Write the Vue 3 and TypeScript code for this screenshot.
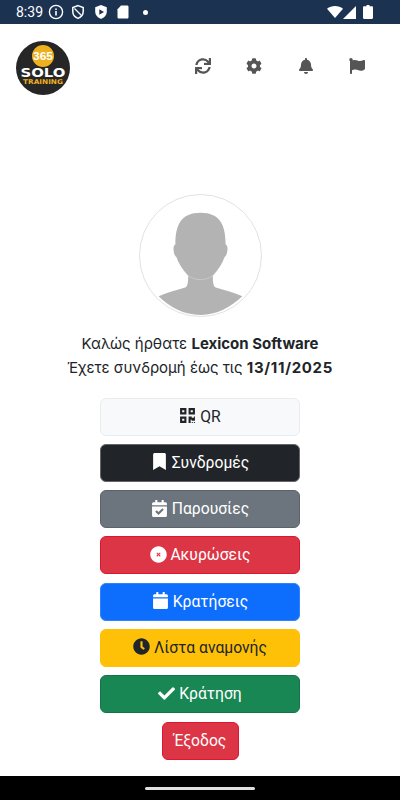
<template>
  <div class="page">
    <div class="status-bar">
      <span class="time">8:39</span>
      <svg class="st-icon" viewBox="0 0 16 16"><circle cx="8" cy="8" r="6.6" fill="none" stroke="#fff" stroke-width="1.4" /><path d="M7.200 7h1.600v4.400H7.200zM7.200 4.400h1.600V6H7.200z" fill="#fff" /></svg>
      <svg class="st-icon" viewBox="0 0 16 16"><path d="M8 1.600l5.200 2v4c0 3.200-2.200 5.700-5.200 6.800-3-1.100-5.200-3.600-5.200-6.800v-4z" fill="none" stroke="#fff" stroke-width="1.500" /><path d="M4.500 4.500l7 7" stroke="#fff" stroke-width="1.300" /></svg>
      <svg class="st-icon" viewBox="0 0 16 16"><path d="M8 1l5.800 2.200v4.400c0 3.400-2.400 6.100-5.800 7.400-3.400-1.300-5.800-4-5.800-7.400V3.200z" fill="#fff" /><path d="M6.300 5.200L11 8l-4.700 2.800z" fill="#1b3250" /></svg>
      <svg class="st-icon" viewBox="0 0 16 16"><path d="M6 1.500h6.200c.7 0 1.300.6 1.300 1.300v10.400c0 .7-.6 1.300-1.300 1.300H3.800c-.7 0-1.300-.6-1.300-1.300V5.200z" fill="#fff" /></svg>
      <span class="st-dot"></span>
      <span class="st-spacer"></span>
      <svg class="st-wifi" viewBox="0 0 16 12"><path d="M0 2.800C2.200 1 5 0 8 0s5.800 1 8 2.800L8 12z" fill="#fff" /></svg>
      <svg class="st-signal" viewBox="0 0 13 13"><path d="M13 0v13H0z" fill="#fff" /></svg>
      <svg class="st-battery" viewBox="0 0 10 14"><path d="M3.500 0h3v1.200h2.300c.7 0 1.200.5 1.200 1.200v10.400c0 .7-.5 1.200-1.200 1.200H1.200C.5 14 0 13.500 0 12.800V2.400c0-.7.5-1.200 1.200-1.200h2.300z" fill="#fff" /></svg>
    </div>

    <header class="header">
      <svg class="logo" viewBox="0 0 54 54">
        <circle cx="27" cy="27" r="27" fill="#262626" />
        <circle cx="27" cy="15" r="11" fill="#eeb01f" />
        <text x="27" y="19" textLength="20" lengthAdjust="spacingAndGlyphs" class="logo-365">365</text>
        <text x="27" y="35.500" textLength="45" lengthAdjust="spacingAndGlyphs" class="logo-solo">SOLO</text>
        <text x="27" y="43" textLength="40" lengthAdjust="spacingAndGlyphs" class="logo-training">TRAINING</text>
      </svg>
      <nav class="header-icons">
        <svg v-for="icon in headerIcons" :key="icon.name" class="header-icon" :viewBox="icon.box"><path :d="icon.d" /></svg>
      </nav>
    </header>

    <main class="content">
      <div class="avatar">
        <svg viewBox="0 0 123 123">
          <path d="M19 103C27 99 37 97 46 94C48 93 49 90 49 82C43 76 39 69 37 63C35 62 34 58 34 54C34 52 35 51 36 50C36 30 42 18 61.500 18C81 18 87 30 87 50C88 51 89 52 89 54C89 58 88 62 86 63C84 69 80 76 74 82C74 90 75 93 77 94C86 97 96 99 104 103C92 114 78 122 61.500 122C45 122 30 114 19 103Z" fill="#b3b3b3" />
          <path d="M49 82C53 85 57 86 61.500 86S70 85 74 82" fill="none" stroke="#c9c9c9" stroke-width="1" />
        </svg>
      </div>

      <p class="welcome">Καλώς ήρθατε <strong>Lexicon Software</strong></p>
      <p class="welcome">Έχετε συνδρομή έως τις <strong class="date">13/11/2025</strong></p>

      <div class="actions">
        <button v-for="item in actions" :key="item.label" class="btn" :class="item.cls">
          <svg class="btn-icon" :viewBox="item.box"><path :d="item.d" /></svg>
          {{ item.label }}
        </button>
        <button class="btn btn-danger btn-exit">Έξοδος</button>
      </div>
    </main>

    <div class="nav-bar"><span class="home-pill"></span></div>
  </div>
</template>

<script setup lang="ts">
interface IconDef {
  name: string
  box: string
  d: string
}

interface ActionItem {
  label: string
  cls: string
  box: string
  d: string
}

const headerIcons: IconDef[] = [
  {
    name: 'sync',
    box: '0 0 512 512',
    d: 'M440.65 12.57l4 82.77A247.16 247.16 0 0 0 255.83 8C134.73 8 33.91 94.92 12.29 209.82A12 12 0 0 0 24.09 224h49.05a12 12 0 0 0 11.67-9.26 175.91 175.91 0 0 1 317-56.94l-101.46-4.86a12 12 0 0 0-12.57 12v47.41a12 12 0 0 0 12 12H500a12 12 0 0 0 12-12V12a12 12 0 0 0-12-12h-47.37a12 12 0 0 0-11.98 12.57zM255.83 432a175.61 175.61 0 0 1-146-77.8l101.8 4.87a12 12 0 0 0 12.57-12v-47.4a12 12 0 0 0-12-12H12a12 12 0 0 0-12 12V500a12 12 0 0 0 12 12h47.35a12 12 0 0 0 12-12.6l-4.15-82.57A247.17 247.17 0 0 0 255.83 504c121.11 0 221.93-86.92 243.55-201.82a12 12 0 0 0-11.8-14.18h-49.05a12 12 0 0 0-11.67 9.26A175.86 175.86 0 0 1 255.83 432z'
  },
  {
    name: 'cog',
    box: '0 0 512 512',
    d: 'M487.4 315.7l-42.6-24.6c4.3-23.2 4.3-47 0-70.2l42.6-24.6c4.9-2.8 7.1-8.6 5.5-14-11.1-35.6-30-67.8-54.7-94.6-3.8-4.1-10-5.1-14.8-2.3L380.8 110c-17.9-15.4-38.5-27.3-60.8-35.1V25.8c0-5.6-3.9-10.5-9.4-11.7-36.7-8.2-74.3-7.8-109.2 0-5.5 1.2-9.4 6.1-9.4 11.7V75c-22.2 7.9-42.8 19.8-60.8 35.1L88.7 85.5c-4.9-2.8-11-1.9-14.8 2.3-24.7 26.7-43.6 58.9-54.7 94.6-1.7 5.4.6 11.2 5.5 14L67.3 221c-4.3 23.2-4.3 47 0 70.2l-42.6 24.6c-4.9 2.8-7.1 8.6-5.5 14 11.1 35.6 30 67.8 54.7 94.6 3.8 4.1 10 5.1 14.8 2.3l42.6-24.6c17.9 15.4 38.5 27.3 60.8 35.1v49.2c0 5.6 3.9 10.5 9.4 11.7 36.7 8.2 74.3 7.8 109.2 0 5.5-1.2 9.4-6.1 9.4-11.7v-49.2c22.2-7.9 42.8-19.8 60.8-35.1l42.6 24.6c4.9 2.8 11 1.9 14.8-2.3 24.7-26.7 43.6-58.9 54.7-94.6 1.5-5.5-.7-11.3-5.6-14.1zM256 336c-44.1 0-80-35.9-80-80s35.9-80 80-80 80 35.9 80 80-35.9 80-80 80z'
  },
  {
    name: 'bell',
    box: '0 0 448 512',
    d: 'M224 512c35.32 0 63.97-28.65 63.97-64H160.03c0 35.35 28.65 64 63.97 64zm215.39-149.71c-19.32-20.76-55.47-51.99-55.47-154.29 0-77.7-54.48-139.9-127.94-155.16V32c0-17.67-14.32-32-31.98-32s-31.98 14.33-31.98 32v20.84C118.56 68.1 64.08 130.3 64.08 208c0 102.3-36.15 133.53-55.47 154.29-6 6.45-8.66 14.16-8.61 21.71.11 16.4 12.98 32 32.1 32h383.8c19.12 0 32-15.6 32.1-32 .05-7.55-2.61-15.27-8.61-21.71z'
  },
  {
    name: 'flag',
    box: '0 0 512 512',
    d: 'M349.565 98.783C295.978 98.783 251.721 64 184.348 64c-24.955 0-47.309 4.384-68.045 12.013a55.947 55.947 0 0 0 3.586-23.562C118.117 24.015 94.806 1.206 66.338.048 34.345-1.254 8 24.296 8 56c0 19.026 9.497 35.825 24 45.945V488c0 13.255 10.745 24 24 24h16c13.255 0 24-10.745 24-24v-94.4c28.311-12.064 63.582-22.122 114.435-22.122 53.588 0 97.844 34.783 165.217 34.783 48.169 0 86.667-16.294 122.505-40.858C506.84 359.452 512 349.571 512 339.045v-243.1c0-23.393-24.269-38.87-45.485-29.016-34.338 15.948-76.454 31.854-116.95 31.854z'
  }
]

const actions: ActionItem[] = [
  {
    label: 'QR',
    cls: 'btn-light',
    box: '0 0 448 512',
    d: 'M0 224h192V32H0v192zM64 96h64v64H64V96zm192-64v192h192V32H256zm128 128h-64V96h64v64zM0 480h192V288H0v192zm64-128h64v64H64v-64zm352-64h32v128h-96v-32h-32v96h-64V288h96v32h64v-32zm0 160h32v32h-32v-32zm-64 0h32v32h-32v-32z'
  },
  {
    label: 'Συνδρομές',
    cls: 'btn-dark',
    box: '0 0 384 512',
    d: 'M0 512V48C0 21.49 21.49 0 48 0h288c26.51 0 48 21.49 48 48v464L192 400 0 512z'
  },
  {
    label: 'Παρουσίες',
    cls: 'btn-secondary',
    box: '0 0 448 512',
    d: 'M436 160H12c-6.627 0-12-5.373-12-12v-36c0-26.51 21.49-48 48-48h48V12c0-6.627 5.373-12 12-12h40c6.627 0 12 5.373 12 12v52h128V12c0-6.627 5.373-12 12-12h40c6.627 0 12 5.373 12 12v52h48c26.51 0 48 21.49 48 48v36c0 6.627-5.373 12-12 12zM12 192h424c6.627 0 12 5.373 12 12v260c0 26.51-21.49 48-48 48H48c-26.51 0-48-21.49-48-48V204c0-6.627 5.373-12 12-12zm333.296 95.947l-28.169-28.398c-4.667-4.705-12.265-4.736-16.97-.068L194.12 364.665l-45.98-46.352c-4.667-4.705-12.266-4.736-16.971-.068l-28.397 28.17c-4.705 4.667-4.736 12.265-.068 16.97l82.601 83.269c4.667 4.705 12.265 4.736 16.97.068l142.953-141.805c4.705-4.667 4.736-12.265.068-16.97z'
  },
  {
    label: 'Ακυρώσεις',
    cls: 'btn-danger',
    box: '0 0 512 512',
    d: 'M256 8C119 8 8 119 8 256s111 248 248 248 248-111 248-248S393 8 256 8zm64 208l-40 40 40 40-24 24-40-40-40 40-24-24 40-40-40-40 24-24 40 40 40-40z'
  },
  {
    label: 'Κρατήσεις',
    cls: 'btn-primary',
    box: '0 0 448 512',
    d: 'M12 192h424c6.6 0 12 5.4 12 12v260c0 26.5-21.5 48-48 48H48c-26.5 0-48-21.5-48-48V204c0-6.6 5.4-12 12-12zm436-44v-36c0-26.5-21.5-48-48-48h-48V12c0-6.6-5.4-12-12-12h-40c-6.6 0-12 5.4-12 12v52H160V12c0-6.6-5.4-12-12-12h-40c-6.6 0-12 5.4-12 12v52H48C21.5 64 0 85.5 0 112v36c0 6.6 5.4 12 12 12h424c6.6 0 12-5.4 12-12z'
  },
  {
    label: 'Λίστα αναμονής',
    cls: 'btn-warning',
    box: '0 0 512 512',
    d: 'M256 8C119 8 8 119 8 256S119 504 256 504 504 393 504 256 393 8 256 8Zm92.49 313h0l-20 25a16 16 0 0 1-22.49 2.5h0l-67-49.72a40 40 0 0 1-15-31.23V112a16 16 0 0 1 16-16h32a16 16 0 0 1 16 16V256l58 42.5A16 16 0 0 1 348.49 321Z'
  },
  {
    label: 'Κράτηση',
    cls: 'btn-success',
    box: '0 0 512 512',
    d: 'M173.898 439.404l-166.4-166.4c-9.997-9.997-9.997-26.206 0-36.204l36.203-36.204c9.997-9.998 26.207-9.998 36.204 0L192 312.69 432.095 72.596c9.997-9.997 26.207-9.997 36.204 0l36.203 36.204c9.997 9.997 9.997 26.206 0 36.204l-294.4 294.401c-9.998 9.997-26.207 9.997-36.204-.001z'
  }
]
</script>

<style>
html,
body {
  margin: 0;
  background: #fff;
}
</style>

<style scoped>
.page {
  display: flex;
  flex-direction: column;
  width: 400px;
  height: 800px;
  overflow: hidden;
  background: #fff;
  font-family: Inter, "Noto Sans", sans-serif;
  color: #212529;
}

.status-bar {
  display: flex;
  align-items: center;
  flex: none;
  height: 24px;
  padding: 0 27px 0 16px;
  background: #1b3250;
  color: #fff;
}

.time {
  margin-right: 4.500px;
  font-family: Roboto, sans-serif;
  font-size: 14px;
}

.st-icon {
  width: 16px;
  height: 16px;
  margin-right: 6.500px;
}

.st-dot {
  width: 5px;
  height: 5px;
  margin-left: 5px;
  border-radius: 50%;
  background: #fff;
}

.st-spacer {
  flex: 1;
}

.st-wifi {
  width: 16px;
  height: 12px;
}

.st-signal {
  width: 13px;
  height: 13px;
}

.st-battery {
  width: 10px;
  height: 14px;
  margin-left: 7px;
}

.header {
  display: flex;
  align-items: center;
  justify-content: space-between;
  flex: none;
  padding: 17px 35px 0 16px;
}

.logo {
  width: 54px;
  height: 54px;
}

.logo-365 {
  fill: #fff;
  font-size: 11px;
  font-family: "Liberation Sans", sans-serif;
  font-weight: 700;
  text-anchor: middle;
}

.logo-solo {
  fill: #fff;
  font-size: 11.500px;
  font-family: "DejaVu Sans", sans-serif;
  font-weight: 700;
  text-anchor: middle;
}

.logo-training {
  fill: #eeb01f;
  font-size: 6.500px;
  font-family: "DejaVu Sans", sans-serif;
  font-weight: 700;
  text-anchor: middle;
}

.header-icons {
  display: flex;
  align-items: center;
  gap: 35.300px;
  margin-bottom: 5px;
}

.header-icon {
  width: 16px;
  height: 16px;
  fill: #555;
}

.content {
  display: flex;
  flex: 1;
  flex-direction: column;
  align-items: center;
  padding-top: 99px;
}

.avatar {
  box-sizing: border-box;
  width: 123px;
  height: 123px;
  margin-bottom: 15px;
  border: 1px solid #e2e2e2;
  border-radius: 50%;
  overflow: hidden;
}

.avatar svg {
  display: block;
  width: 100%;
  height: 100%;
}

.welcome {
  margin: 0;
  font-size: 15px;
  line-height: 24px;
  text-align: center;
}

.date {
  letter-spacing: 0.700px;
}

.actions {
  display: flex;
  flex-direction: column;
  align-items: center;
  gap: 8.300px;
  margin-top: 17.500px;
}

.btn {
  box-sizing: border-box;
  width: 200px;
  height: 38px;
  padding: 0;
  border: 1px solid transparent;
  border-radius: 6px;
  font-family: Roboto, sans-serif;
  font-size: 15.700px;
  line-height: 24px;
  white-space: nowrap;
}

.btn-icon {
  width: 17px;
  height: 17px;
  vertical-align: -2.500px;
  fill: currentColor;
}

.btn-light {
  background: #f8f9fa;
  border-color: #e9ecef;
  color: #212529;
}

.btn-dark {
  background: #212529;
  border-color: #64676a;
  color: #fff;
}

.btn-secondary {
  background: #6c757d;
  border-color: #5c636a;
  color: #fff;
}

.btn-danger {
  background: #dc3545;
  border-color: #e0142e;
  color: #fff;
}

.btn-primary {
  background: #0d6efd;
  border-color: #2f83fd;
  color: #fff;
}

.btn-warning {
  background: #ffc107;
  border-color: #ffc107;
  color: #212529;
}

.btn-success {
  background: #198754;
  border-color: #157347;
  color: #fff;
}

.btn-exit {
  width: 77px;
}

.nav-bar {
  display: flex;
  align-items: center;
  justify-content: center;
  flex: none;
  height: 24px;
  background: #000;
}

.home-pill {
  width: 110px;
  height: 3px;
  border-radius: 2px;
  background: #e0e0e0;
}
</style>
